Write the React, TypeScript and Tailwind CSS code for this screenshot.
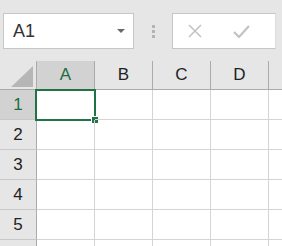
const cols = ["A", "B", "C", "D", ""];
const rows = [1, 2, 3, 4, 5, 6];

const font = { fontFamily: '"Liberation Sans", Arial, sans-serif' };

const App = () => {
  return (
    <div className="w-[282px] h-[246px] overflow-hidden bg-white" style={font}>
      {/* formula bar */}
      <div className="h-[61px] bg-[#e6e6e6] flex items-start pt-[13px] pl-[3px]">
        <div className="w-[131px] h-[36px] bg-white border border-[#c6c6c6] flex items-center justify-between pl-[9px] pr-[8px]">
          <span className="text-[18px] text-[#333]">A1</span>
          <svg width="8" height="5" viewBox="0 0 8 5">
            <path d="M0 0 L8 0 L4 4 Z" fill="#6b6b6b" />
          </svg>
        </div>
        <div className="w-[38px] h-[36px] flex flex-col items-center justify-center gap-[2px]">
          <span className="w-[3px] h-[3px] bg-[#b4b4b4]" />
          <span className="w-[3px] h-[3px] bg-[#b4b4b4]" />
          <span className="w-[3px] h-[3px] bg-[#b4b4b4]" />
        </div>
        <div className="w-[104px] h-[36px] bg-white border border-[#c6c6c6] border-r-[#dcdcdc] flex items-center pl-[15px] gap-[31px]">
          <svg width="14" height="14" viewBox="0 0 14 14">
            <path d="M1 1 L13 13 M13 1 L1 13" stroke="#c3c3c3" strokeWidth="1.6" fill="none" />
          </svg>
          <svg width="17" height="13" viewBox="0 0 17 13">
            <path d="M1 7 L6 12 L16 1" stroke="#c3c3c3" strokeWidth="2.2" fill="none" />
          </svg>
        </div>
      </div>

      {/* column headers */}
      <div className="flex h-[29px]">
        <div className="w-[37px] shrink-0 bg-[#e6e6e6] border-r border-b border-[#ababab] flex items-end justify-end pr-[3px] pb-[2px]">
          <svg width="22" height="21" viewBox="0 0 22 21">
            <path d="M22 0 L22 21 L0 21 Z" fill="#b6b6b6" />
          </svg>
        </div>
        {cols.map((c, i) => (
          <div
            key={i}
            className={
              "w-[58px] shrink-0 border-r border-b border-[#ababab] flex items-center justify-center text-[17px] " +
              (i === 0 ? "bg-[#d2d2d2] text-[#1e6b41]" : "bg-[#e6e6e6] text-[#222]")
            }
          >
            {c}
          </div>
        ))}
      </div>

      {/* rows */}
      {rows.map((r) => (
        <div key={r} className="flex h-[30px]">
          <div
            className={
              "w-[37px] shrink-0 border-r border-b border-r-[#ababab] border-b-[#c8c8c8] flex items-center justify-center text-[17px] " +
              (r === 1 ? "bg-[#d2d2d2] text-[#1e6b41]" : "bg-[#e6e6e6] text-[#222]")
            }
          >
            {r <= 5 ? r : ""}
          </div>
          {cols.map((c, i) => (
            <div key={i} className="relative w-[58px] shrink-0 border-r border-b border-[#d4d4d4]">
              {r === 1 && i === 0 && (
                <div className="absolute -left-[2px] -top-[1px] w-[61px] h-[32px] border-2 border-[#217346]">
                  <div className="absolute -right-[5px] -bottom-[5px] w-[8px] h-[8px] bg-[#217346] border border-white" />
                </div>
              )}
            </div>
          ))}
        </div>
      ))}
    </div>
  );
};

export default App;
